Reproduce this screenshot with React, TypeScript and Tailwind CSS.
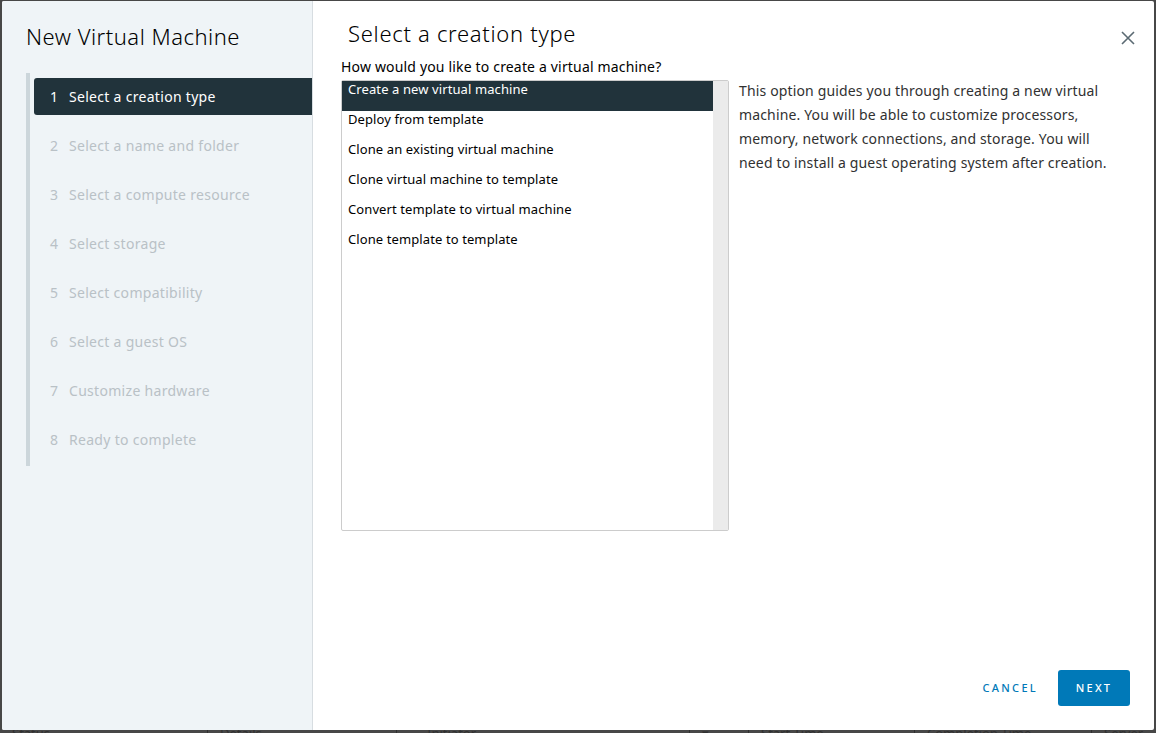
import React from "react";

const steps = [
  "Select a creation type",
  "Select a name and folder",
  "Select a compute resource",
  "Select storage",
  "Select compatibility",
  "Select a guest OS",
  "Customize hardware",
  "Ready to complete",
];

const options = [
  "Create a new virtual machine",
  "Deploy from template",
  "Clone an existing virtual machine",
  "Clone virtual machine to template",
  "Convert template to virtual machine",
  "Clone template to template",
];

export default function App() {
  return (
    <div
      className="relative w-[1156px] h-[733px] overflow-hidden bg-[#474747]"
      style={{ fontFamily: '"Noto Sans", "Open Sans", sans-serif' }}
    >
      {/* background page header strip */}
      <div className="absolute left-0 top-[724px] w-full h-[20px] flex text-[13px] text-[#222] opacity-60">
        <div className="w-[208px] pl-[12px] border-r border-[#222]">Status</div>
        <div className="w-[189px] pl-[12px] border-r border-[#222]">Details</div>
        <div className="w-[293px] pl-[30px] border-r border-[#222]">Initiator</div>
        <div className="w-[59px] pl-[12px] border-r border-[#222]">▾</div>
        <div className="w-[166px] pl-[12px] border-r border-[#222]">Start Time</div>
        <div className="w-[177px] pl-[12px] border-r border-[#222]">Completion Time</div>
        <div className="flex-1 pl-[12px]">Server</div>
      </div>

      {/* modal */}
      <div className="absolute left-[2px] top-[1px] w-[1152px] h-[729px] bg-white flex rounded-[2px] overflow-hidden">
        {/* sidebar */}
        <div className="w-[311px] shrink-0 bg-[#eff4f7] border-r border-[#d7dde1] flex flex-col">
          <div className="pl-[24px] pt-[20px] h-[72px] text-[22px] text-[#000] font-light leading-[30px] tracking-[0.5px]">
            New Virtual Machine
          </div>
          <div className="ml-[24px] border-l-[4px] border-[#ccd6db] pt-[5px] pb-[8px] flex flex-col gap-[12px]">
            {steps.map((s, i) => (
              <div
                key={s}
                className={
                  i === 0
                    ? "h-[37px] shrink-0 ml-[4px] pl-[16px] flex items-center bg-[#21333b] text-white rounded-l-[3px] text-[14px] tracking-[0.3px]"
                    : "h-[37px] shrink-0 ml-[4px] pl-[16px] flex items-center text-[#b9c1c6] text-[14px] tracking-[0.3px]"
                }
              >
                <span className="w-[19px]">{i + 1}</span>
                <span>{s}</span>
              </div>
            ))}
          </div>
        </div>

        {/* content */}
        <div className="flex-1 relative flex flex-col pl-[28px] pr-[24px]">
          <div className="h-[56px] pt-[17px] pl-[7px] text-[22px] font-light text-[#000] leading-[30px] tracking-[0.7px]">
            Select a creation type
          </div>
          <div className="text-[14px] text-[#000] leading-[20px] h-[23px] tracking-[0.17px]">
            How would you like to create a virtual machine?
          </div>
          <div className="flex gap-[10px]">
            <div className="w-[388px] h-[451px] shrink-0 border border-[#cccccc] flex rounded-[2px]">
              <div className="flex-1 flex flex-col">
                {options.map((o, i) => (
                  <div
                    key={o}
                    className={
                      i === 0
                        ? "h-[30px] pl-[6px] text-[13px] leading-[16px] tracking-[0.1px] bg-[#21333b] text-white"
                        : "h-[30px] pl-[6px] text-[13px] leading-[16px] tracking-[0.1px] text-[#000]"
                    }
                  >
                    {o}
                  </div>
                ))}
              </div>
              <div className="w-[15px] bg-[#ebebeb]" />
            </div>
            <div className="w-[380px] text-[14px] leading-[24px] text-[#313131] -mt-[1px] tracking-[0.15px]">
              This option guides you through creating a new virtual machine. You will be able to
              customize processors, memory, network connections, and storage. You will need to
              install a guest operating system after creation.
            </div>
          </div>

          <button className="absolute right-[16px] top-[27px] w-[20px] h-[20px] flex items-center justify-center">
            <svg width="16" height="16" viewBox="0 0 16 16">
              <path d="M2 2 L14 14 M14 2 L2 14" stroke="#5b6a73" strokeWidth="1.6" />
            </svg>
          </button>

          <div className="mt-auto mb-[24px] flex justify-end items-center gap-[20px] pr-0">
            <button className="text-[11px] tracking-[2.3px] text-[#0079b8] font-medium">
              CANCEL
            </button>
            <button className="w-[72px] h-[36px] bg-[#0079b8] text-white text-[11px] tracking-[2.2px] font-medium rounded-[3px]">
              NEXT
            </button>
          </div>
        </div>
      </div>
    </div>
  );
}
